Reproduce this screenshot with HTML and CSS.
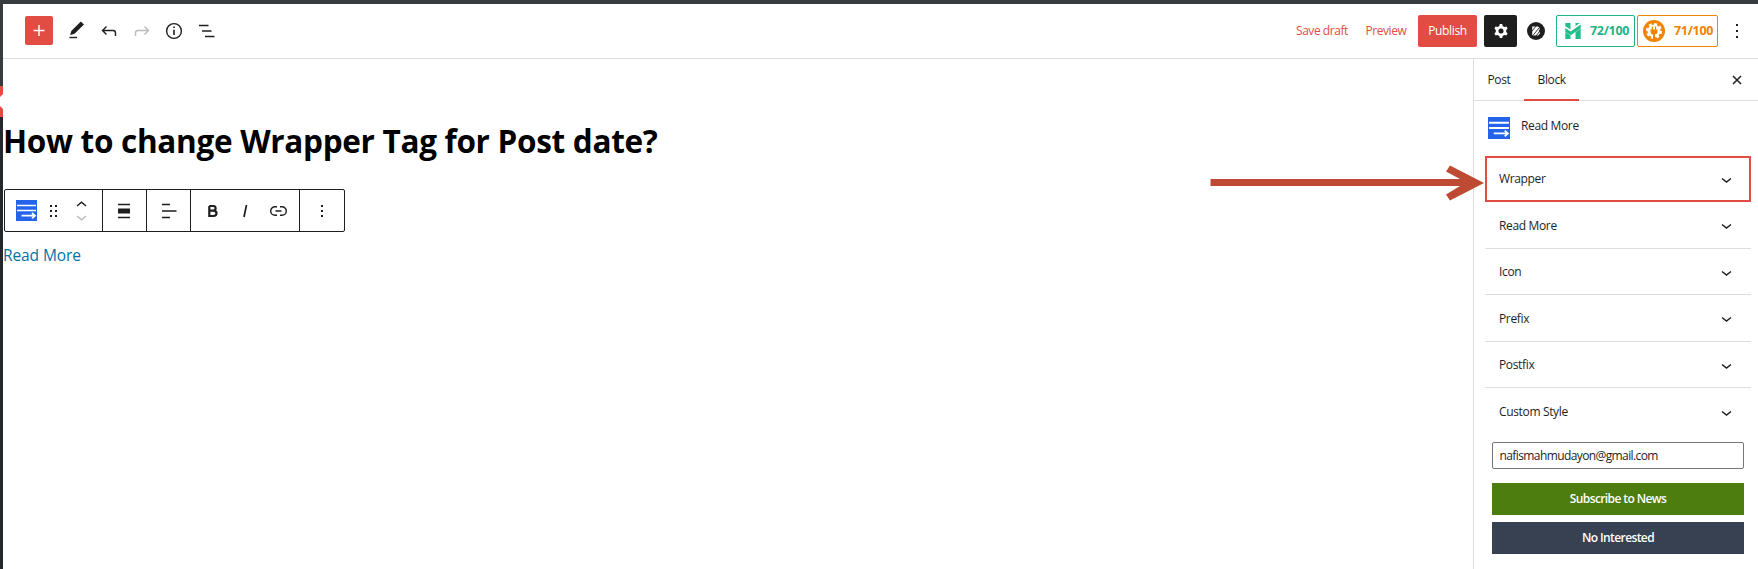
FILE: index.html
```html
<!DOCTYPE html>
<html lang="en">
<head>
<meta charset="utf-8">
<title>Edit Post</title>
<link rel="stylesheet" href="styles.css">
</head>
<body>
<div class="editor">
  <header class="topbar">
    <div class="tools">
      <button class="add"><svg width="28" height="29" viewBox="0 0 28 29"><path d="M14 9v11M8.500 14.500h11" stroke="#fff" stroke-width="1.500"/></svg></button>
      <svg class="tool" width="22" height="22" viewBox="0 0 22 22"><path d="M4.300 14.500L5.300 11L14.800 1.500L18 4.500L8.500 13.800L4.600 15z" fill="#1e1e1e"/><path d="M3.500 17.500h7.500" stroke="#1e1e1e" stroke-width="1.400"/></svg>
      <svg class="tool" width="22" height="22" viewBox="0 0 22 22"><path d="M8.500 6.500L4.500 10.500L8.500 14.500M4.500 10.500H15Q17.500 10.500 17.500 13V16" fill="none" stroke="#1e1e1e" stroke-width="1.400"/></svg>
      <svg class="tool" width="22" height="22" viewBox="0 0 22 22"><path d="M13.500 6.500L17.500 10.500L13.500 14.500M17.500 10.500H7Q4.500 10.500 4.500 13V16" fill="none" stroke="#bbb" stroke-width="1.400"/></svg>
      <svg class="tool" width="22" height="22" viewBox="0 0 22 22"><circle cx="11" cy="11" r="7.400" fill="none" stroke="#1e1e1e" stroke-width="1.400"/><path d="M11 9.700v5.300M11 6.500v1.600" stroke="#1e1e1e" stroke-width="1.600"/></svg>
      <svg class="tool" width="22" height="22" viewBox="0 0 22 22"><path d="M3 5.500h9.500M6 11h9.500M9 16.500H18.500" stroke="#1e1e1e" stroke-width="1.400"/></svg>
    </div>
    <div class="actions">
      <a class="link draft">Save draft</a>
      <a class="link preview">Preview</a>
      <button class="publish">Publish</button>
      <button class="settings"><svg width="16" height="16" viewBox="0 0 16 16"><path d="M6.300 3L6.800 1h2.400l.5 2 1.700 1 2-.6 1.200 2.100L13.200 7v2l1.400 1.500-1.200 2.100-2-.6-1.700 1-.5 2H6.800l-.5-2-1.700-1-2 .6-1.200-2.100L2.800 9V7L1.400 5.500l1.200-2.100 2 .6z" fill="#fff"/><circle cx="8" cy="8" r="2.500" fill="#1e1e1e"/></svg></button>
      <svg class="blockhub" width="18" height="18" viewBox="0 0 18 18"><circle cx="9" cy="9" r="9" fill="#1e1e1e"/><path d="M5.200 4.500H11l1.600 1.500v2L11.500 9l1.300 1.200v1.500L11 13.500H5.200z" fill="#fff"/><path d="M4.800 9.500l4-5.300M5.500 14L12 6M9 14l3.500-4.500" stroke="#1e1e1e" stroke-width=".9"/></svg>
      <div class="score green"><svg width="16" height="16" viewBox="0 0 16 16"><path d="M.3 0H5.500V16H.3zM10.500 0h5.200v16h-5.200z" fill="#1fbf8a"/><path d="M-2 4.800L5.600 9.600 18 .9" stroke="#fff" stroke-width="5" fill="none"/><path d="M.3 5L5.700 8.500 15.700 1.600V5.300L5.700 12.200.3 9z" fill="#1fbf8a"/></svg><span>72/100</span></div>
      <div class="score orange"><svg width="22" height="22" viewBox="0 0 22 22"><circle cx="11" cy="11" r="11" fill="#f08300"/><circle cx="11" cy="11" r="6.500" fill="#fff"/><circle cx="11" cy="11" r="7" fill="none" stroke="#fff" stroke-width="2.200" stroke-dasharray="2.900 2.600"/><path d="M8.800 6.500h1.300V9.500h1.800V6.500h1.300V9.500h1.300v2.200q0 2.300-2.500 2.900V19h-2v-4.400q-2.500-.6-2.500-2.900V9.500h1.300z" fill="#f08300"/></svg><span>71/100</span></div>
      <svg class="dots" width="6" height="16" viewBox="0 0 6 16"><path d="M2 1h2v2H2zM2 7h2v2H2zM2 13h2v2H2z" fill="#1e1e1e"/></svg>
    </div>
  </header>
  <div class="body">
    <main class="canvas">
      <h1 class="title"><span>How to change Wrapper Tag for Post date?</span></h1>
      <div class="toolbar">
        <div class="group g1">
          <svg width="21" height="21" viewBox="0 0 21 21"><rect width="21" height="21" fill="#2563eb"/><path d="M1 5.500h19M1 10.500h19M5.500 15.700H19M16 13l3 2.700-3 2.700" fill="none" stroke="#fff" stroke-width="1.700"/></svg>
          <svg class="grip" width="8" height="14" viewBox="0 0 8 14"><path d="M0 1h2v2H0zM5 1h2v2H5zM0 6h2v2H0zM5 6h2v2H5zM0 11h2v2H0zM5 11h2v2H5z" fill="#1e1e1e"/></svg>
          <svg class="mover" width="11" height="22" viewBox="0 0 11 22"><path d="M1 6L5.500 2.200 10 6" fill="none" stroke="#1e1e1e" stroke-width="1.500"/><path d="M1 16l4.500 3.800L10 16" fill="none" stroke="#bbb" stroke-width="1.500"/></svg>
        </div>
        <div class="group g2"><svg width="14" height="16" viewBox="0 0 14 16"><path d="M1 1.500h12M1 14.500h12" stroke="#1e1e1e" stroke-width="1.300"/><path d="M1 5.500h12v5H1z" fill="#1e1e1e"/></svg></div>
        <div class="group g3"><svg width="16" height="16" viewBox="0 0 16 16"><path d="M1 1.500h8M1 8h14.500M1 14.500h8" stroke="#1e1e1e" stroke-width="1.300"/></svg></div>
        <div class="group g4">
          <svg width="12" height="14" viewBox="0 0 12 14"><path d="M2.300 2h4Q8.600 2 8.600 4.300T6.300 6.700H2.300M6.300 6.700Q9.500 6.700 9.500 9.300T6.300 12H2.300V2" fill="none" stroke="#1e1e1e" stroke-width="2.200"/></svg>
          <svg class="italic" width="8" height="14" viewBox="0 0 8 14"><path d="M5.500 1L3 13" stroke="#1e1e1e" stroke-width="1.700"/></svg>
          <svg class="chain" width="17" height="12" viewBox="0 0 17 12"><path d="M7 1.700H5a4.300 4.300 0 0 0 0 8.600h2M10 1.700h2a4.300 4.300 0 0 1 0 8.600h-2M5.500 6h6" fill="none" stroke="#1e1e1e" stroke-width="1.400"/></svg>
        </div>
        <div class="group g5"><svg width="4" height="14" viewBox="0 0 4 14"><path d="M1 1h2v2H1zM1 6h2v2H1zM1 11h2v2H1z" fill="#1e1e1e"/></svg></div>
      </div>
      <a class="readmore">Read More</a>
    </main>
    <aside class="sidebar">
      <div class="tabs">
        <span class="tab post">Post</span><span class="tab block">Block</span>
        <svg class="close" width="10" height="10" viewBox="0 0 10 10"><path d="M1 1l8 8M9 1L1 9" stroke="#1e1e1e" stroke-width="1.500"/></svg>
      </div>
      <div class="card">
        <svg width="22" height="22" viewBox="0 0 21 21"><rect width="21" height="21" fill="#2563eb"/><path d="M1 5.500h19M1 10.500h19M5.500 15.700H19M16 13l3 2.700-3 2.700" fill="none" stroke="#fff" stroke-width="1.700"/></svg>
        <span>Read More</span>
      </div>
      <div class="panels">
        <div class="panel marked"><span>Wrapper</span><svg class="chev" width="11" height="7" viewBox="0 0 11 7"><path d="M1 1.500l4.500 3.500L10 1.500" fill="none" stroke="#1e1e1e" stroke-width="1.500"/></svg></div>
        <div class="panel"><span>Read More</span><svg class="chev" width="11" height="7" viewBox="0 0 11 7"><path d="M1 1.500l4.500 3.500L10 1.500" fill="none" stroke="#1e1e1e" stroke-width="1.500"/></svg></div>
        <div class="panel"><span>Icon</span><svg class="chev" width="11" height="7" viewBox="0 0 11 7"><path d="M1 1.500l4.500 3.500L10 1.500" fill="none" stroke="#1e1e1e" stroke-width="1.500"/></svg></div>
        <div class="panel"><span>Prefix</span><svg class="chev" width="11" height="7" viewBox="0 0 11 7"><path d="M1 1.500l4.500 3.500L10 1.500" fill="none" stroke="#1e1e1e" stroke-width="1.500"/></svg></div>
        <div class="panel"><span>Postfix</span><svg class="chev" width="11" height="7" viewBox="0 0 11 7"><path d="M1 1.500l4.500 3.500L10 1.500" fill="none" stroke="#1e1e1e" stroke-width="1.500"/></svg></div>
        <div class="panel last"><span>Custom Style</span><svg class="chev" width="11" height="7" viewBox="0 0 11 7"><path d="M1 1.500l4.500 3.500L10 1.500" fill="none" stroke="#1e1e1e" stroke-width="1.500"/></svg></div>
      </div>
      <div class="form">
        <div class="email"><span>nafismahmudayon@gmail.com</span></div>
        <button class="wide subscribe">Subscribe to News</button>
        <button class="wide decline">No Interested</button>
      </div>
    </aside>
  </div>
</div>
<svg class="flag" width="3" height="31" viewBox="0 0 3 31"><path d="M0 0h3v31H0z" fill="#e14d43"/><path d="M3 8L0 11v9l3 3z" fill="#fff"/></svg>
<svg class="arrow" width="275" height="36" viewBox="0 0 275 36"><path d="M.500 14H250L236 6.500 240 .5 274 18 240 35.500 236 29.500 250 21H.500z" fill="#bf4a33"/></svg>
</body>
</html>
```
FILE: styles.css
```css
* { box-sizing: border-box; }
body { margin: 0; width: 1758px; height: 569px; overflow: hidden; background: linear-gradient(#363b3f 0 115px, #23282d 118px); font: 12px/16px "Open Sans", "Noto Sans", sans-serif; letter-spacing: -0.35px; color: #1e1e1e; }
button { border: 0; padding: 0; font: inherit; letter-spacing: inherit; color: #fff; display: flex; align-items: center; justify-content: center; }
svg { display: block; flex: none; }
span, a { white-space: nowrap; }
.editor { margin-left: 3px; padding-top: 4px; height: 569px; display: flex; flex-direction: column; background: #fff linear-gradient(#363b3f 0 4px, transparent 4px) no-repeat; }
.topbar { height: 55px; flex: none; border-bottom: 1px solid #ddd; display: flex; justify-content: space-between; align-items: center; padding: 0 18px 0 22px; }
.tools { display: flex; align-items: center; }
.add { width: 28px; height: 29px; background: #e14d43; border-radius: 2px; margin: -1px 13px 0 0; }
.tool { margin-right: 10.400px; }
.actions { display: flex; align-items: center; }
.link { color: #e14d43; letter-spacing: -.45px; }
.draft { width: 50.500px; margin-right: 19px; }
.preview { width: 40px; margin-right: 12.500px; }
.publish { width: 59px; height: 32px; background: #e14d43; border-radius: 2px; margin-right: 7px; }
.settings { width: 33px; height: 32px; background: #1e1e1e; border-radius: 2px; margin-right: 10px; }
.blockhub { margin-right: 11px; }
.score { height: 32px; border: 1px solid; border-radius: 2px; display: flex; align-items: center; font-weight: 700; font-size: 12.500px; letter-spacing: -.3px; }
.green { width: 79px; color: #22b583; padding-left: 8px; gap: 9px; margin-right: 2px; }
.orange { width: 81px; color: #f08300; padding-left: 5px; gap: 9px; margin-right: 16px; }
.body { flex: 1; display: flex; }
.canvas { flex: 1; display: flex; flex-direction: column; align-items: flex-start; }
.title { margin: 60px 0 0; font-size: 31.500px; line-height: 44px; font-weight: 700; letter-spacing: -.3px; color: #000; }
.toolbar { margin: 26px 0 0 1px; width: 341px; height: 43px; border: 1px solid #1e1e1e; border-radius: 2px; display: flex; }
.group { display: flex; align-items: center; border-right: 1px solid #1e1e1e; justify-content: center; }
.g1 { width: 98px; padding-left: 11px; justify-content: flex-start; }
.grip { margin-left: 13px; }
.mover { margin-left: 17.500px; }
.g2, .g3 { width: 44px; }
.g2 { padding-right: 1px; }
.g4 { width: 109px; padding-left: 16px; justify-content: flex-start; }
.italic { margin-left: 22px; }
.chain { margin-left: 20.500px; }
.g5 { flex: 1; border: 0; }
.readmore { margin-top: 13px; font-size: 15.500px; line-height: 20px; color: #0073aa; letter-spacing: -.1px; }
.sidebar { width: 285px; border-left: 1px solid #ddd; }
.tabs { height: 42px; border-bottom: 1px solid #ddd; display: flex; align-items: center; }
.tab { height: 42px; line-height: 42px; }
.post { width: 50px; padding-left: 13.500px; }
.block { width: 55px; padding-left: 13.500px; border-bottom: 2px solid #e14d43; }
.close { margin-left: auto; margin-right: 16px; }
.card { height: 55px; display: flex; padding: 16px 0 0 14px; gap: 11px; }
.card span { padding-top: 1px; }
.panels { padding: 0 7px 0 11px; }
.panel { height: 46.500px; border-bottom: 1px solid #ddd; display: flex; align-items: center; justify-content: space-between; padding: 2px 19px 0 14px; }
.marked { border: 2px solid #e14d43; height: 46px; padding: 0 17px 0 12px; }
.chev { margin-top: 2px; }
.last { border: 0; }
.form { padding: 7px 14px 0 18px; }
.email { height: 27px; border: 1px solid #757575; border-radius: 2px; padding: 5px 6.500px; margin-bottom: 14px; letter-spacing: -.6px; }
.wide { width: 100%; height: 32px; font-weight: 600; letter-spacing: -.6px; margin-bottom: 7px; }
.subscribe { background: #4d7c0f; }
.decline { background: #374151; }
.flag { position: absolute; left: 0; top: 86px; }
.arrow { position: absolute; left: 1210px; top: 165px; }
```
